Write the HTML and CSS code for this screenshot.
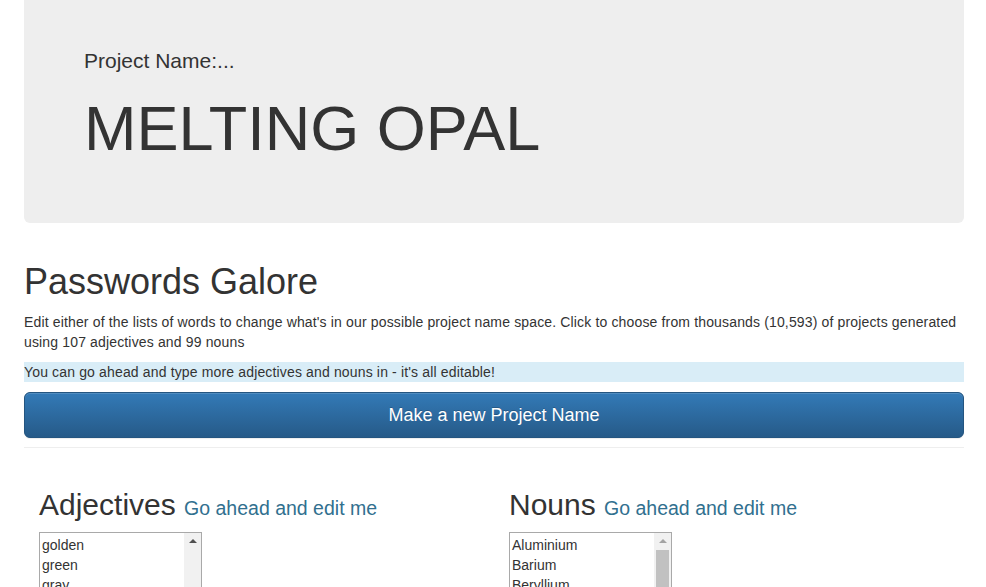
FILE: index.html
```html
<!DOCTYPE html>
<html>
<head>
    <title>Passwords Galore</title>
    <link rel="stylesheet" href="styles.css">
</head>
<body>
    <div class="container">
        <div class="jumbotron">
            <p>Project Name:...</p>
            <h1 id="projectName">MELTING OPAL</h1>
        </div>

        <h1 class="title">Passwords Galore</h1>
        <p class="intro">Edit either of the lists of words to change what's in our possible project name space. Click to choose from thousands (10,593) of projects generated using 107 adjectives and 99 nouns</p>
        <p class="hint">You can go ahead and type more adjectives and nouns in - it's all editable!</p>
        <button class="btn-make" id="makeButton">Make a new Project Name</button>

        <hr>

        <div class="lists">
            <div class="list-col">
                <h2>Adjectives <small>Go ahead and edit me</small></h2>
                <div class="listbox">
                    <div class="listbox-text" id="adjectives" contenteditable="true">golden<br>green<br>gray</div>
                    <div class="scrollbar">
                        <span class="scroll-up"></span>
                        <span class="thumb thumb-low"></span>
                    </div>
                </div>
            </div>
            <div class="list-col">
                <h2>Nouns <small>Go ahead and edit me</small></h2>
                <div class="listbox">
                    <div class="listbox-text" id="nouns" contenteditable="true">Aluminium<br>Barium<br>Beryllium</div>
                    <div class="scrollbar">
                        <span class="scroll-up scroll-up-off"></span>
                        <span class="thumb"></span>
                    </div>
                </div>
            </div>
        </div>
    </div>

    <script>
        const makeButton = document.getElementById("makeButton");
        const projectName = document.getElementById("projectName");

        function words(id) {
            return document.getElementById(id).innerText.split("\n").filter(function(w) {
                return w.trim() !== "";
            });
        }

        makeButton.addEventListener("click", function() {
            const adjectives = words("adjectives");
            const nouns = words("nouns");
            const adj = adjectives[Math.floor(Math.random() * adjectives.length)];
            const noun = nouns[Math.floor(Math.random() * nouns.length)];
            projectName.textContent = (adj + " " + noun).toUpperCase();
        });
    </script>
</body>
</html>
```

FILE: styles.css
```css
body {
    margin: 0;
    font-family: "Liberation Sans", Arial, sans-serif;
    font-size: 14px;
    line-height: 20px;
    color: #333;
    background-color: #fff;
}

.container {
    width: 940px;
    margin-left: 24px;
}

.jumbotron {
    background-color: #eee;
    border-radius: 0 0 6px 6px;
    padding: 46px 60px 50px;
}

.jumbotron p {
    margin: 0 0 18px;
    font-size: 21px;
    line-height: 30px;
}

.jumbotron h1 {
    margin: 0 0 10px;
    font-size: 63px;
    line-height: 1.1;
    font-weight: normal;
}

.title {
    margin: 39px 0 10px;
    font-size: 36px;
    line-height: 1.1;
    font-weight: normal;
}

.intro {
    margin: 0 0 10px;
    letter-spacing: 0.15px;
}

.hint {
    margin: 0 0 10px;
    background-color: #d9edf7;
    letter-spacing: 0.15px;
}

.btn-make {
    display: block;
    width: 100%;
    padding: 10px 16px;
    font-family: inherit;
    font-size: 18px;
    line-height: 24px;
    color: #fff;
    background-color: #265a88;
    background-image: linear-gradient(to bottom, #337ab7 0, #265a88 100%);
    border: 1px solid #245580;
    border-radius: 6px;
    text-shadow: 0 -1px 0 rgba(0, 0, 0, .2);
    box-shadow: inset 0 1px 0 rgba(255, 255, 255, .15), 0 1px 1px rgba(0, 0, 0, .075);
    cursor: pointer;
}

hr {
    margin: 9px 0 20px;
    border: 0;
    border-top: 1px solid #eee;
}

.lists {
    display: flex;
}

.list-col {
    width: 470px;
    padding: 0 15px;
    box-sizing: border-box;
}

.list-col h2 {
    margin: 20px 0 11px;
    font-size: 30px;
    line-height: 1.1;
    font-weight: normal;
}

.list-col h2 small {
    font-size: 65%;
    color: #31708f;
}

.listbox {
    display: flex;
    width: 163px;
    height: 260px;
    border: 1px solid #a9a9a9;
    box-sizing: border-box;
    background-color: #fff;
}

.listbox-text {
    flex: 1;
    padding: 2px;
    line-height: 20px;
    overflow: hidden;
    outline: none;
}

.scrollbar {
    width: 17px;
    display: flex;
    flex-direction: column;
    background-color: #f1f1f1;
}

.scroll-up {
    height: 17px;
    display: flex;
    align-items: center;
    justify-content: center;
}

.scroll-up::before {
    content: "";
    border-left: 4px solid transparent;
    border-right: 4px solid transparent;
    border-bottom: 4px solid #505050;
}

.scroll-up-off::before {
    border-bottom-color: #a3a3a3;
}

.thumb {
    margin: 0 2px;
    height: 120px;
    background-color: #c1c1c1;
}

.thumb-low {
    margin-top: 90px;
}
```
